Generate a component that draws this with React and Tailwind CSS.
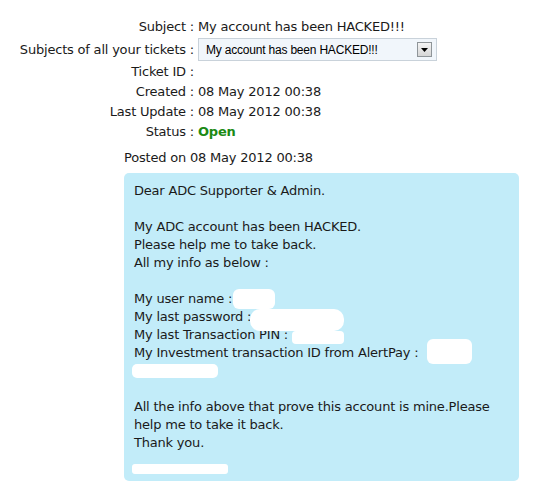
import React from 'react';

const rows = [
  { label: 'Subject :', value: 'My account has been HACKED!!!' },
  { label: 'Subjects of all your tickets :', select: true },
  { label: 'Ticket ID :', value: '' },
  { label: 'Created :', value: '08 May 2012 00:38' },
  { label: 'Last Update :', value: '08 May 2012 00:38' },
  { label: 'Status :', value: 'Open', status: true },
];

const message = [
  'Dear ADC Supporter & Admin.',
  '',
  'My ADC account has been HACKED.',
  'Please help me to take back.',
  'All my info as below :',
  '',
  'My user name :',
  'My last password :',
  'My last Transaction PIN :',
  'My Investment transaction ID from AlertPay :',
  '',
  '',
  'All the info above that prove this account is mine.Please',
  'help me to take it back.',
  'Thank you.',
  '',
];

// white blots hiding private data, placed over the message
const blots = [
  'left-[109px] top-[116px] w-[42px] h-[20px] rounded-[6px]',
  'left-[126px] top-[136px] w-[94px] h-[22px] rounded-[10px]',
  'left-[168px] top-[158px] w-[52px] h-[13px] rounded-[4px]',
  'left-[303px] top-[166px] w-[45px] h-[25px] rounded-[6px]',
  'left-[8px] top-[191px] w-[86px] h-[14px] rounded-[5px]',
  'left-[8px] top-[291px] w-[96px] h-[10px] rounded-[3px]',
];

const TicketSelect = () => (
  <div className="flex items-center w-[239px] h-[23px] border border-[#c9d2da] bg-[#f1f6fb] pl-[7px] pr-[4px]">
    <span className="flex-1 text-[12px] text-black font-['Liberation_Sans',sans-serif] tracking-[-0.2px]">
      My account has been HACKED!!!
    </span>
    <span className="flex items-center justify-center w-[15px] h-[15px] border border-[#8f9599] bg-gradient-to-b from-[#f4f4f4] to-[#d6d6d6]">
      <svg width="7" height="4" viewBox="0 0 7 4">
        <path d="M0 0h7L3.5 4z" fill="#000" />
      </svg>
    </span>
  </div>
);

export default function App() {
  return (
    <div className="w-[560px] h-[497px] bg-white text-[#1a1a1a] text-[13px] font-['DejaVu_Sans',sans-serif] tracking-[-0.2px]">
      <div className="grid grid-cols-[194px_1fr] gap-x-[4px] pt-[17px]">
        {rows.map((r) => (
          <React.Fragment key={r.label}>
            <div className={`text-right flex items-center justify-end ${r.select ? 'h-[25px]' : 'h-[20px]'}`}>
              {r.label}
            </div>
            <div className={`flex items-center ${r.select ? 'h-[25px]' : 'h-[20px]'}`}>
              {r.select ? (
                <TicketSelect />
              ) : r.status ? (
                <span className="font-bold text-[#1b8a14]">{r.value}</span>
              ) : (
                r.value
              )}
            </div>
          </React.Fragment>
        ))}
      </div>

      <div className="ml-[124px] mt-[6px] w-[395px]">
        <div className="h-[20px] flex items-center">Posted on 08 May 2012 00:38</div>
        <div className="relative mt-[5px] h-[308px] rounded-[5px] bg-[#c2ecf9] px-[10px] pt-[9px] leading-[18px]">
          {message.map((line, i) => (
            <div key={i} className="h-[18px] whitespace-pre">
              {line}
            </div>
          ))}
          {blots.map((b) => (
            <span key={b} className={`absolute bg-white ${b}`} />
          ))}
        </div>
      </div>
    </div>
  );
}
